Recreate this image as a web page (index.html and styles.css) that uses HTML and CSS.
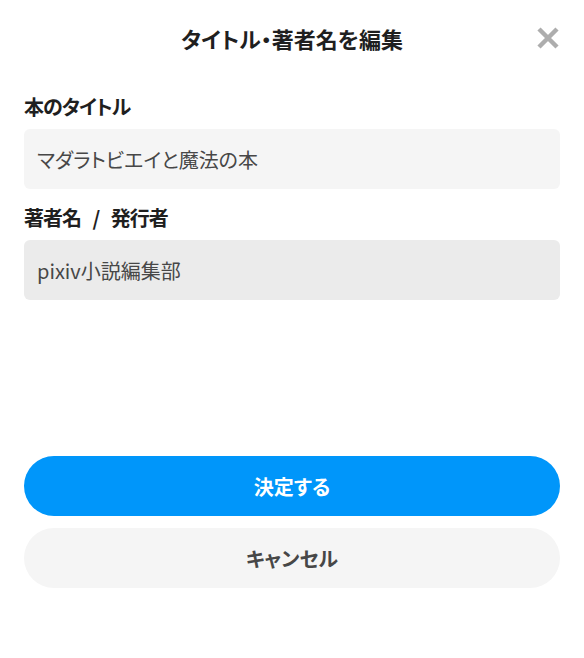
FILE: index.html
```html
<!DOCTYPE html>
<html>
<head>
    <title>タイトル・著者名を編集</title>
    <link rel="stylesheet" href="styles.css">
</head>
<body>
    <div class="dialog">
        <div class="header">
            <span></span>
            <h2 class="title">タイトル・著者名を編集</h2>
            <button class="close-button" type="button" aria-label="閉じる">
                <svg width="24" height="24" viewBox="0 0 24 24">
                    <path d="M3 3L21 21M21 3L3 21" stroke="#adadad" stroke-width="4.5" stroke-linecap="butt"/>
                </svg>
            </button>
        </div>

        <form class="edit-form">
            <div class="form-group">
                <label for="book_title">本のタイトル</label>
                <input type="text" id="book_title" value="マダラトビエイと魔法の本">
            </div>
            <div class="form-group">
                <label for="author">著者名 / 発行者</label>
                <input type="text" id="author" value="pixiv小説編集部" disabled>
            </div>

            <div class="actions">
                <button type="submit" class="primary-button">決定する</button>
                <button type="button" class="cancel-button">キャンセル</button>
            </div>
        </form>
    </div>
</body>
</html>
```

FILE: styles.css
```css
body {
    margin: 0;
    background-color: #fff;
    font-family: "Noto Sans CJK JP", "Noto Sans", sans-serif;
    font-feature-settings: "palt";
    color: #1f1f1f;
}

.dialog {
    padding: 0 24px;
}

.header {
    display: grid;
    grid-template-columns: 1fr auto 1fr;
    align-items: center;
    height: 76px;
}

.title {
    margin: 0;
    font-size: 22px;
    font-weight: bold;
    line-height: 30px;
}

.close-button {
    justify-self: end;
    display: flex;
    padding: 0;
    border: none;
    background: none;
    cursor: pointer;
}

.edit-form {
    margin-top: 19px;
}

.form-group {
    margin-bottom: 17px;
}

label {
    display: block;
    margin-bottom: 10px;
    font-size: 20px;
    font-weight: bold;
    line-height: 24px;
    letter-spacing: -1px;
    word-spacing: 8px;
}

input[type="text"] {
    display: block;
    width: 100%;
    height: 60px;
    padding: 0 13px;
    border: none;
    border-radius: 6px;
    box-sizing: border-box;
    background-color: #f5f5f5;
    color: #474747;
    font-family: inherit;
    font-feature-settings: "palt";
    font-size: 20px;
    outline: none;
}

input[type="text"]:disabled {
    background-color: #ebebeb;
    color: #474747;
}

.actions {
    display: flex;
    flex-direction: column;
    gap: 12px;
    margin-top: 156px;
}

.primary-button,
.cancel-button {
    height: 60px;
    border: none;
    border-radius: 30px;
    font-family: inherit;
    font-feature-settings: "palt";
    font-size: 20px;
    font-weight: bold;
    cursor: pointer;
}

.primary-button {
    background-color: #0096fa;
    color: #fff;
}

.cancel-button {
    background-color: #f5f5f5;
    color: #474747;
}
```
